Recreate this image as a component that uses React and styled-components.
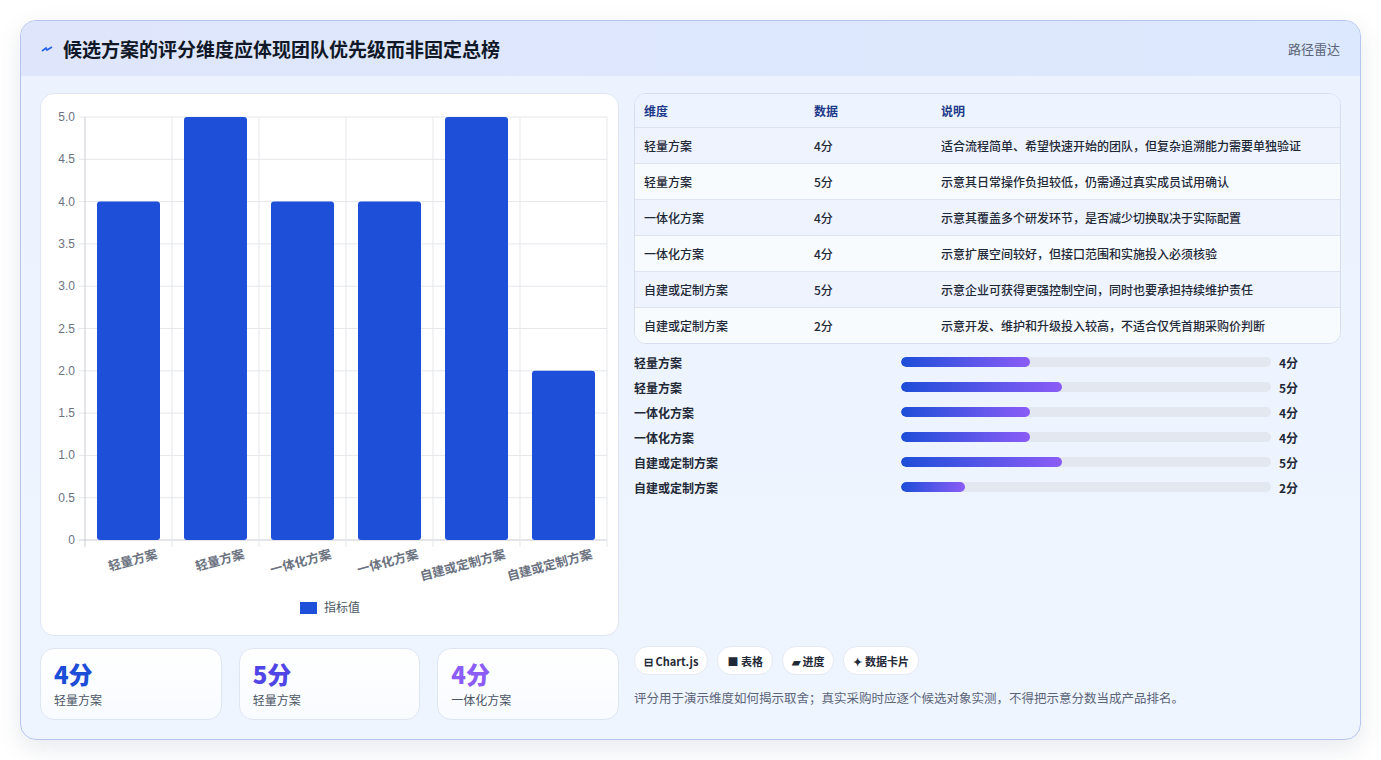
import React from "react";
import styled, { createGlobalStyle } from "styled-components";

const G = createGlobalStyle`
  body{margin:0;background:#fff;font-family:"Noto Sans CJK SC","Noto Sans",sans-serif;}
`;
const Page = styled.div`padding:20px 20px 20px 20px;height:760px;box-sizing:border-box;`;
const Card = styled.div`
  height:720px;box-sizing:border-box;border:1px solid #b6c4ee;border-radius:16px;overflow:hidden;
  background:linear-gradient(180deg,#edf3fe,#eff5ff);box-shadow:0 8px 24px rgba(60,70,110,.12);
  display:flex;flex-direction:column;`;
const Header = styled.div`
  height:55px;flex:none;display:flex;align-items:center;justify-content:space-between;padding:0 20px;
  background:linear-gradient(90deg,#dfe6fc,#dce8fd);`;
const Title = styled.div`font-size:19px;font-weight:700;color:#111827;display:flex;align-items:center;gap:10px;`;
const Tag = styled.div`font-size:13px;color:#5b6478;`;
const Body = styled.div`flex:1;display:grid;grid-template-columns:579px 1fr;gap:15px;padding:17px 19px 19px 19px;`;
const Col = styled.div`display:flex;flex-direction:column;gap:12px;`;
const Panel = styled.div`background:#fff;border:1px solid #dfe6f3;border-radius:14px;`;
const ChartBox = styled(Panel)`height:543px;box-sizing:border-box;`;
const Stats = styled.div`display:grid;grid-template-columns:repeat(3,1fr);gap:17px;`;
const Stat = styled(Panel)`height:72px;box-sizing:border-box;padding:10px 13px;background:linear-gradient(180deg,#fff,#f8fbff);`;
const StatV = styled.div`font-size:24px;font-weight:800;color:${p=>p.c};line-height:30px;`;
const StatL = styled.div`font-size:12px;color:#4b5563;margin-top:2px;`;
const Table = styled.div`border:1px solid #d6def0;border-radius:12px;overflow:hidden;background:#f7faff;`;
const Row = styled.div`display:grid;grid-template-columns:170px 127px 1fr;height:${p=>p.h}px;align-items:center;padding:0 9px;
  font-size:12px;color:${p=>p.head?"#1e3a8a":"#1f2937"};font-weight:${p=>p.head?600:500};
  background:${p=>p.head?"#eef4ff":p.alt?"#f8fbfe":"#eef3fe"};border-top:${p=>p.first?"none":"1px solid #dde4f1"};`;
const Bars = styled.div`display:flex;flex-direction:column;gap:7px;margin-top:9px;`;
const BRow = styled.div`display:grid;grid-template-columns:267px 370px 1fr;align-items:center;height:18px;font-size:12px;font-weight:600;color:#1f2937;`;
const Track = styled.div`height:10px;border-radius:5px;background:#e2e7f0;overflow:hidden;`;
const Fill = styled.div`height:100%;border-radius:5px;background:linear-gradient(90deg,#1d4ed8,#8b5cf6);`;
const Val = styled.div`padding-left:8px;`;
const Spacer = styled.div`flex:1;`;
const Chips = styled.div`display:flex;gap:9px;`;
const Chip = styled.div`height:27px;padding:0 9px;border:1px solid #e4e9f3;border-radius:14px;background:#fff;display:flex;align-items:center;gap:4px;font-size:11px;font-weight:700;color:#1f2937;`;
const Note = styled.div`font-size:12.5px;color:#5b6478;margin:13px 0 13px;`;

const data=[["轻量方案",4,"适合流程简单、希望快速开始的团队，但复杂追溯能力需要单独验证"],["轻量方案",5,"示意其日常操作负担较低，仍需通过真实成员试用确认"],["一体化方案",4,"示意其覆盖多个研发环节，是否减少切换取决于实际配置"],["一体化方案",4,"示意扩展空间较好，但接口范围和实施投入必须核验"],["自建或定制方案",5,"示意企业可获得更强控制空间，同时也要承担持续维护责任"],["自建或定制方案",2,"示意开发、维护和升级投入较高，不适合仅凭首期采购价判断"]];

function Chart(){
  const x0=44,x1=566,y0=446,yT=23,cw=(x1-x0)/6;
  const ticks=[0,.5,1,1.5,2,2.5,3,3.5,4,4.5,5];
  const y=v=>y0-(y0-yT)*v/5;
  return <svg width="577" height="541" style={{display:"block"}}>
    {ticks.map(t=><g key={t}><line x1={x0-6} x2={x1} y1={y(t)} y2={y(t)} stroke={t===0?"#c9ccd3":"#e5e7eb"}/>
      <text x={x0-10} y={y(t)+4} fontSize="12" fill="#6b7280" textAnchor="end" fontFamily="Liberation Sans">{t===0?"0":t.toFixed(1)}</text></g>)}
    {[0,1,2,3,4,5,6].map(i=><line key={i} x1={x0+i*cw} x2={x0+i*cw} y1={yT} y2={y0+7} stroke={i===0?"#c9ccd3":"#e5e7eb"}/>)}
    {data.map((d,i)=><g key={i}><rect x={x0+i*cw+12} y={y(d[1])} width={cw-24} height={y0-y(d[1])} rx="3" fill="#1d4fd8"/>
      <text transform={`translate(${x0+i*cw+cw-14},${y0+18}) rotate(-15)`} textAnchor="end" fontSize="12.5" fontWeight="600" fill="#6b7280">{d[0]}</text></g>)}
    <rect x="259" y="508" width="17" height="12" fill="#1d4fd8"/>
    <text x="283" y="518" fontSize="12" fill="#4b5563">指标值</text>
  </svg>;
}

export default function App(){
  return <Page><G/><Card>
    <Header><Title><svg width="12" height="10" viewBox="0 0 12 10"><path d="M1 7 L5 4 L6 6 L11 3" stroke="#2563eb" strokeWidth="1.6" fill="none"/></svg>候选方案的评分维度应体现团队优先级而非固定总榜</Title><Tag>路径雷达</Tag></Header>
    <Body>
      <Col>
        <ChartBox><Chart/></ChartBox>
        <Stats>
          <Stat><StatV c="#1d4ed8">4分</StatV><StatL>轻量方案</StatL></Stat>
          <Stat><StatV c="#4f46e5">5分</StatV><StatL>轻量方案</StatL></Stat>
          <Stat><StatV c="#8b5cf6">4分</StatV><StatL>一体化方案</StatL></Stat>
        </Stats>
      </Col>
      <Col style={{gap:0}}>
        <Table>
          <Row head first h={33}><div>维度</div><div>数据</div><div>说明</div></Row>
          {data.map((d,i)=><Row key={i} alt={i%2===1} h={35}><div>{d[0]}</div><div>{d[1]}分</div><div>{d[2]}</div></Row>)}
        </Table>
        <Bars>{data.map((d,i)=><BRow key={i}><div>{d[0]}</div><Track><Fill style={{width:`${d[1]*8.7}%`}}/></Track><Val>{d[1]}分</Val></BRow>)}</Bars>
        <Spacer/>
        <Chips><Chip>⊟ Chart.js</Chip><Chip>■ 表格</Chip><Chip>▰ 进度</Chip><Chip>✦ 数据卡片</Chip></Chips>
        <Note>评分用于演示维度如何揭示取舍；真实采购时应逐个候选对象实测，不得把示意分数当成产品排名。</Note>
      </Col>
    </Body>
  </Card></Page>;
}
